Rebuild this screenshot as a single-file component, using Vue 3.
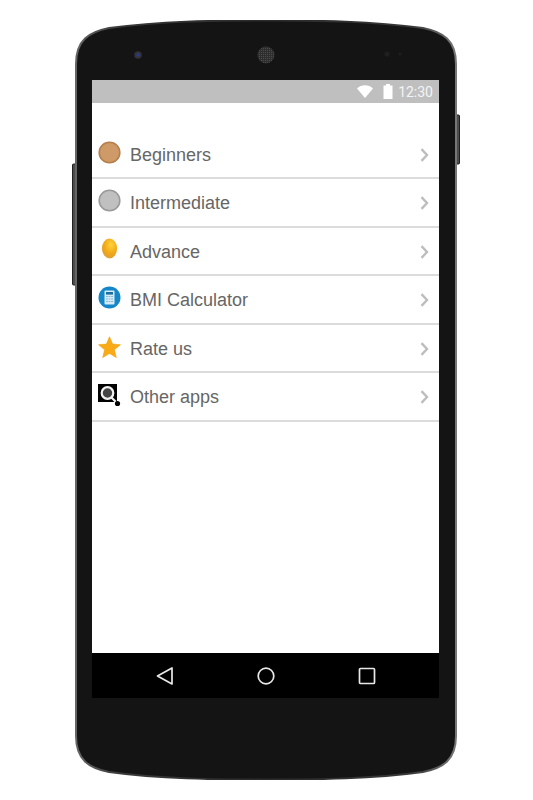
<template>
  <div class="page">
    <div class="phone">
      <!-- handset outline, sits behind the screen -->
      <svg class="shell" width="391" height="760" viewBox="0 0 391 760">
        <defs>
          <linearGradient id="rim" x1="0" y1="0" x2="1" y2="0">
            <stop offset="0" stop-color="#666" />
            <stop offset="0.12" stop-color="#383838" />
            <stop offset="0.5" stop-color="#2a2a2a" />
            <stop offset="0.88" stop-color="#383838" />
            <stop offset="1" stop-color="#777" />
          </linearGradient>
          <pattern id="mesh" width="2" height="2" patternUnits="userSpaceOnUse">
            <rect width="2" height="2" fill="#2e2e2e" />
            <rect width="1" height="1" fill="#4c4c4c" />
          </pattern>
        </defs>
        <rect x="1.5" y="144" width="5" height="121" rx="1" fill="#4c4c4c" stroke="#222" />
        <rect x="384" y="95" width="4.5" height="49" rx="1" fill="#4c4c4c" stroke="#222" />
        <path
          class="body"
          d="M5 44C5 20 18 12 38 8C90 1 140 0.5 195 0.5C250 0.5 300 1 352 8C372 12 385 20 385 44V716C385 740 372 748 352 752C300 759 250 759.5 195 759.5C140 759.5 90 759 38 752C18 748 5 740 5 716Z"
          fill="#141414"
          stroke="url(#rim)"
          stroke-width="2"
        />
        <circle cx="67" cy="35" r="3.8" fill="#333" />
        <circle cx="67" cy="35" r="1.8" fill="#2a3a8c" />
        <circle cx="195" cy="35" r="8.5" fill="url(#mesh)" />
        <circle cx="316" cy="34" r="2.6" fill="#1f1f1f" />
        <circle cx="329" cy="34" r="1.6" fill="#1f1f1f" />
      </svg>

      <div class="screen">
        <div class="status">
          <svg width="16" height="13" viewBox="0 0 16 13">
            <path d="M0 3.5C4.5 -0.8 11.5 -0.8 16 3.5L8 13Z" fill="#fff" />
          </svg>
          <svg class="battery" width="10" height="15" viewBox="0 0 10 15">
            <path d="M3 0H7V1.5H9.5V15H0.5V1.5H3Z" fill="#fff" />
          </svg>
          <span class="time">12:30</span>
        </div>

        <ul class="menu">
          <li v-for="item in items" :key="item.label" class="row">
            <span class="icon">
              <svg v-if="item.icon === 'bronze'" width="23" height="23" viewBox="0 0 23 23">
                <circle cx="11.5" cy="11.5" r="10.3" fill="#cd9a68" stroke="#b67f4b" stroke-width="1.6" />
              </svg>
              <svg v-else-if="item.icon === 'silver'" width="23" height="23" viewBox="0 0 23 23">
                <circle cx="11.5" cy="11.5" r="10.3" fill="#c0c0c0" stroke="#9a9a9a" stroke-width="1.6" />
              </svg>
              <svg v-else-if="item.icon === 'gold'" width="23" height="23" viewBox="0 0 23 23">
                <defs>
                  <radialGradient id="gold" cx="0.6" cy="0.32" r="0.8">
                    <stop offset="0" stop-color="#ffd23c" />
                    <stop offset="0.55" stop-color="#f0a818" />
                    <stop offset="0.8" stop-color="#e2a030" />
                    <stop offset="1" stop-color="#f8e6b8" />
                  </radialGradient>
                </defs>
                <ellipse cx="11.5" cy="10.5" rx="7.6" ry="10" fill="url(#gold)" />
              </svg>
              <svg v-else-if="item.icon === 'calc'" width="23" height="23" viewBox="0 0 23 23">
                <circle cx="11.5" cy="11.5" r="11" fill="#1587c8" />
                <rect x="6.5" y="4.5" width="10" height="14" rx="1" fill="#d6ebf6" />
                <rect x="8" y="6" width="7" height="2.6" fill="#1b6f9f" />
                <path d="M8 10.5H15M8 13H15M8 15.5H15" stroke="#7fb9da" stroke-width="1.2" />
                <path d="M10.3 9.5V17M12.7 9.5V17" stroke="#d6ebf6" stroke-width="0.8" />
              </svg>
              <svg v-else-if="item.icon === 'star'" class="star" width="23" height="23" viewBox="0 0 23 23">
                <path
                  d="M11.5 0.8L14.6 8.1L22.4 8.7L16.4 13.8L18.3 21.6L11.5 17.4L4.7 21.6L6.6 13.8L0.6 8.7L8.4 8.1Z"
                  fill="#f8ab16"
                  stroke="#f2a00c"
                  stroke-width="0.6"
                />
              </svg>
              <svg v-else class="apps" width="23" height="23" viewBox="0 0 23 23">
                <rect x="0" y="0" width="19" height="18" fill="#000" />
                <circle cx="9.5" cy="9" r="5.8" fill="#444" stroke="#f2f2f2" stroke-width="2.2" />
                <path d="M13.5 13.5L18 18" stroke="#f2f2f2" stroke-width="2.2" />
                <circle cx="19.5" cy="19.5" r="2.6" fill="#000" />
              </svg>
            </span>
            <span class="label">{{ item.label }}</span>
            <svg class="chevron" width="9" height="14" viewBox="0 0 9 14">
              <path d="M1.5 1.2L7 7L1.5 12.8" fill="none" stroke="#bdbdbd" stroke-width="2.4" />
            </svg>
          </li>
        </ul>

        <div class="navbar">
          <svg width="18" height="18" viewBox="0 0 18 18">
            <path d="M16 1V17L1.5 9Z" fill="none" stroke="#e8e8e8" stroke-width="1.7" stroke-linejoin="round" />
          </svg>
          <svg width="18" height="18" viewBox="0 0 18 18">
            <circle cx="9" cy="9" r="7.8" fill="none" stroke="#e8e8e8" stroke-width="1.7" />
          </svg>
          <svg width="18" height="18" viewBox="0 0 18 18">
            <rect x="1.5" y="1.5" width="15" height="15" rx="1" fill="none" stroke="#e8e8e8" stroke-width="1.7" />
          </svg>
        </div>
      </div>
    </div>
  </div>
</template>

<script setup>
const items = [
  { label: 'Beginners', icon: 'bronze' },
  { label: 'Intermediate', icon: 'silver' },
  { label: 'Advance', icon: 'gold' },
  { label: 'BMI Calculator', icon: 'calc' },
  { label: 'Rate us', icon: 'star' },
  { label: 'Other apps', icon: 'apps' }
]
</script>

<style scoped>
.page {
  width: 533px;
  height: 800px;
  background: #fff;
  overflow: hidden;
  font-family: "Liberation Sans", Arial, sans-serif;
}

.phone {
  position: relative;
  width: 347px;
  margin-left: 92px;
  padding-top: 80px;
}

.shell {
  position: absolute;
  left: -21px;
  top: 20px;
}

.screen {
  position: relative;
  display: flex;
  flex-direction: column;
  height: 618px;
  background: #fff;
}

.status {
  display: flex;
  align-items: center;
  justify-content: flex-end;
  height: 23px;
  padding-right: 6px;
  background: #bfbfbf;
  color: #f4f4f4;
}

.battery {
  margin-left: 10px;
}

.time {
  margin-left: 5px;
  font-family: Roboto, "Liberation Sans", sans-serif;
  font-size: 14px;
}

.menu {
  flex: 1;
  margin: 0;
  padding: 27.5px 0 0;
  list-style: none;
}

.row {
  display: flex;
  box-sizing: border-box;
  height: 48.5px;
  padding: 10px 10px 0 6px;
  border-bottom: 2px solid #dcdcdc;
}

.icon {
  display: block;
  width: 23px;
  height: 23px;
}

.star {
  margin-top: 1px;
}

.apps {
  margin-top: 1px;
}

.label {
  flex: 1;
  margin-left: 9px;
  padding-top: 4px;
  color: #666;
  font-size: 18px;
  line-height: 21px;
}

.chevron {
  margin-top: 7px;
}

.navbar {
  display: flex;
  align-items: center;
  justify-content: flex-start;
  gap: 83px;
  height: 45px;
  padding: 0 0 0 64px;
  background: #000;
}
</style>
